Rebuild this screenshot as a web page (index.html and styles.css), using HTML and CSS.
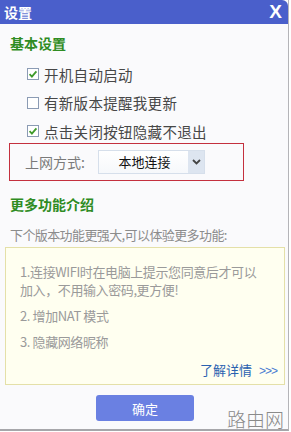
FILE: index.html
```html
<!DOCTYPE html>
<html lang="zh">
<head>
<meta charset="utf-8">
<link rel="stylesheet" href="styles.css">
</head>
<body>
<div class="window">
  <div class="titlebar">
    <span class="title">设置</span>
    <span class="close">X</span>
  </div>
  <div class="content">
    <div class="section-title first">基本设置</div>
    <div class="options">
      <label class="opt">
        <svg class="cb" width="12" height="12" viewBox="0 0 12 12"><rect x="0.5" y="0.5" width="11" height="11" fill="#fff" stroke="#8b9bb4"/><path d="M2.6 6.2 L4.9 8.6 L9.4 3.4" fill="none" stroke="#3f9a2a" stroke-width="1.8"/></svg>
        <span>开机自动启动</span>
      </label>
      <label class="opt">
        <svg class="cb" width="12" height="12" viewBox="0 0 12 12"><rect x="0.5" y="0.5" width="11" height="11" fill="#fff" stroke="#8b9bb4"/></svg>
        <span>有新版本提醒我更新</span>
      </label>
      <label class="opt">
        <svg class="cb" width="12" height="12" viewBox="0 0 12 12"><rect x="0.5" y="0.5" width="11" height="11" fill="#fff" stroke="#8b9bb4"/><path d="M2.6 6.2 L4.9 8.6 L9.4 3.4" fill="none" stroke="#3f9a2a" stroke-width="1.8"/></svg>
        <span>点击关闭按钮隐藏不退出</span>
      </label>
    </div>
    <div class="netbox">
      <span class="netlabel">上网方式:</span>
      <div class="select">
        <span class="select-text">本地连接</span>
        <span class="select-arrow"><svg width="9" height="6" viewBox="0 0 9 6"><path d="M1 1 L4.5 4.5 L8 1" fill="none" stroke="#444" stroke-width="1.8"/></svg></span>
      </div>
    </div>
    <div class="section-title second">更多功能介绍</div>
    <div class="intro">下个版本功能更强大,可以体验更多功能:</div>
    <div class="features">
      <div class="feat">1.连接WIFI时在电脑上提示您同意后才可以<br>加入，不用输入密码,更方便!</div>
      <div class="feat">2. 增加NAT 模式</div>
      <div class="feat">3. 隐藏网络昵称</div>
      <div class="more"><span class="more-link">了解详情</span><span class="arrows">&gt;&gt;&gt;</span></div>
    </div>
    <div class="actions">
      <button class="ok">确定</button>
    </div>
  </div>
  <div class="watermark">路由网</div>
</div>
</body>
</html>
```
FILE: styles.css
```css
* { box-sizing: border-box; }
html, body { margin: 0; padding: 0; background: #ffffff; }
body {
  font-family: "Noto Sans CJK SC", "Liberation Sans", sans-serif;
  width: 291px;
  height: 432px;
  overflow: hidden;
}
.window {
  position: relative;
  width: 289px;
  height: 431px;
  background: #fafafc;
  border-right: 1px solid #b4b4b8;
  border-bottom: 2px solid #a6a6aa;
  display: flex;
  flex-direction: column;
}
.titlebar {
  height: 24px;
  background: #4a5fcb;
  border-top-right-radius: 6px;
  display: flex;
  align-items: center;
  justify-content: space-between;
  padding: 0 6px 0 4px;
  color: #fff;
}
.title {
  font-size: 14px;
  font-weight: bold;
  line-height: 24px;
}
.close {
  font-family: "Liberation Sans", sans-serif;
  font-size: 19px;
  font-weight: bold;
  line-height: 24px;
}
.content {
  display: flex;
  flex-direction: column;
}
.section-title {
  color: #2f8c23;
  font-weight: bold;
  font-size: 14px;
  line-height: 18px;
  padding-left: 10px;
}
.section-title.first { margin-top: 10px; }
.options {
  display: flex;
  flex-direction: column;
  gap: 8.5px;
  margin-top: 12px;
  padding-left: 27px;
}
.opt {
  display: flex;
  align-items: center;
  gap: 5px;
  height: 20px;
  font-size: 14.5px;
  letter-spacing: 0.3px;
  color: #474747;
}
.cb { flex: none; }
.netbox {
  margin: 2px 0 0 9px;
  width: 235px;
  height: 38px;
  border: 1px solid #c4303e;
  display: flex;
  align-items: center;
  padding-left: 15px;
}
.netlabel {
  font-size: 14px;
  color: #7a7a7a;
  width: 73px;
}
.select {
  width: 107px;
  height: 24px;
  border: 1px solid #d6dfeb;
  background: linear-gradient(#ffffff, #f6f8fb);
  display: flex;
  align-items: stretch;
}
.select-text {
  flex: 1;
  text-align: center;
  font-size: 13px;
  line-height: 22px;
  color: #111;
  padding-left: 2px;
}
.select-arrow {
  width: 16px;
  background: #dde5f0;
  display: flex;
  align-items: center;
  justify-content: center;
}
.section-title.second { margin-top: 14px; }
.intro {
  margin-top: 12px;
  padding-left: 10px;
  font-size: 13px;
  letter-spacing: -0.6px;
  line-height: 20px;
  color: #8c8c8c;
}
.features {
  margin: 2px 0 0 5px;
  width: 280px;
  background: #fffff0;
  border: 1px solid #e4e0a8;
  padding: 15px 7px 4px 14px;
  display: flex;
  flex-direction: column;
  gap: 8px;
}
.feat {
  font-size: 13px;
  line-height: 18px;
  letter-spacing: -0.4px;
  color: #9a9a9a;
}
.more {
  margin-top: 2px;
  text-align: right;
  font-size: 13px;
  line-height: 18px;
}
.more-link { color: #2a62b0; }
.arrows {
  color: #4a7ad0;
  margin-left: 7px;
  font-family: "Liberation Sans", sans-serif;
  font-size: 12px;
  letter-spacing: -1px;
}
.actions {
  display: flex;
  padding-left: 96px;
  margin-top: 10px;
}
.ok {
  width: 98px;
  height: 26px;
  border: none;
  border-radius: 3px;
  background: #6a80e2;
  color: #fff;
  font-family: "Noto Sans CJK SC", sans-serif;
  font-size: 13px;
  padding: 0;
}
.watermark {
  position: absolute;
  right: 4px;
  bottom: -3px;
  font-size: 19px;
  color: #8a8a8a;
  font-weight: 300;
  line-height: 26px;
}
```
